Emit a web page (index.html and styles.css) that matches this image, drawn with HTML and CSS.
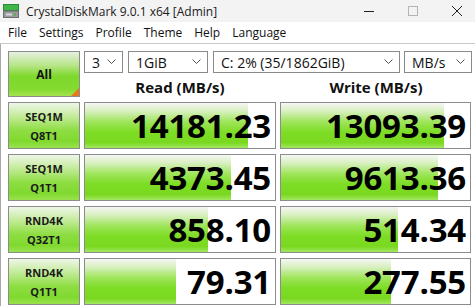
FILE: index.html
```html
<!DOCTYPE html>
<html>
<head>
<meta charset="utf-8">
<link rel="stylesheet" href="styles.css">
</head>
<body>
<div class="window">
  <div class="titlebar">
    <svg class="appicon" width="16" height="14" viewBox="0 0 16 14">
      <rect x="0.5" y="0.5" width="15" height="6" fill="#3fb54a" stroke="#2a8a35"/>
      <rect x="0.5" y="7" width="15" height="6.5" fill="#9a9a9a" stroke="#6e6e6e"/>
      <rect x="3" y="9.5" width="6" height="2" fill="#d8d8d8"/>
      <rect x="11" y="9.5" width="2" height="2" fill="#3fb54a"/>
    </svg>
    <span class="title">CrystalDiskMark 9.0.1 x64 [Admin]</span>
    <div class="controls">
      <svg class="ctl" width="12" height="12" viewBox="0 0 12 12"><path d="M1 6.5H11" stroke="#222" stroke-width="1"/></svg>
      <svg class="ctl" width="12" height="12" viewBox="0 0 12 12"><rect x="1.5" y="1.5" width="9" height="9" fill="none" stroke="#b5b5b5" stroke-width="1"/></svg>
      <svg class="ctl" width="12" height="12" viewBox="0 0 12 12"><path d="M1 1L11 11M11 1L1 11" stroke="#222" stroke-width="1"/></svg>
    </div>
  </div>
  <div class="menubar">
    <span>File</span><span>Settings</span><span>Profile</span><span>Theme</span><span>Help</span><span>Language</span>
  </div>
  <div class="content">
    <div class="top">
      <div class="allbtn">All<span class="corner"></span></div>
      <div class="topright">
        <div class="selects">
          <div class="sel w3"><span>3</span><svg width="9" height="6" viewBox="0 0 9 6"><path d="M0.5 0.5L4.5 4.5L8.5 0.5" fill="none" stroke="#555"/></svg></div>
          <div class="sel w1g"><span>1GiB</span><svg width="9" height="6" viewBox="0 0 9 6"><path d="M0.5 0.5L4.5 4.5L8.5 0.5" fill="none" stroke="#555"/></svg></div>
          <div class="sel wdrv"><span>C: 2% (35/1862GiB)</span><svg width="9" height="6" viewBox="0 0 9 6"><path d="M0.5 0.5L4.5 4.5L8.5 0.5" fill="none" stroke="#555"/></svg></div>
          <div class="sel wunit"><span>MB/s</span><svg width="9" height="6" viewBox="0 0 9 6"><path d="M0.5 0.5L4.5 4.5L8.5 0.5" fill="none" stroke="#555"/></svg></div>
        </div>
        <div class="heads">
          <div class="head">Read (MB/s)</div>
          <div class="head">Write (MB/s)</div>
        </div>
      </div>
    </div>
    <div class="row">
      <div class="label">SEQ1M<br>Q8T1</div>
      <div class="val"><div class="bar" style="width:86%"></div><span>14181.23</span></div>
      <div class="val"><div class="bar" style="width:86%"></div><span>13093.39</span></div>
    </div>
    <div class="row">
      <div class="label">SEQ1M<br>Q1T1</div>
      <div class="val"><div class="bar" style="width:77%"></div><span>4373.45</span></div>
      <div class="val"><div class="bar" style="width:83%"></div><span>9613.36</span></div>
    </div>
    <div class="row">
      <div class="label">RND4K<br>Q32T1</div>
      <div class="val"><div class="bar" style="width:64.5%"></div><span>858.10</span></div>
      <div class="val"><div class="bar" style="width:62%"></div><span>514.34</span></div>
    </div>
    <div class="row">
      <div class="label">RND4K<br>Q1T1</div>
      <div class="val"><div class="bar" style="width:48%"></div><span>79.31</span></div>
      <div class="val"><div class="bar" style="width:58%"></div><span>277.55</span></div>
    </div>
  </div>
</div>
</body>
</html>
```
FILE: styles.css
```css
* { box-sizing: border-box; }
html, body { margin: 0; padding: 0; background: #ffffff; }
body { font-family: "Open Sans", "Noto Sans", "Liberation Sans", sans-serif; color: #000; }
.window { width: 475px; height: 307px; overflow: hidden; background: #fff; }
.titlebar {
  height: 22px; background: #f3f3f3; display: flex; align-items: center;
  padding-left: 3px; font-size: 12px;
}
.appicon { margin-right: 7px; }
.title { color: #1a1a1a; }
.controls { margin-left: auto; display: flex; gap: 32px; padding-right: 12px; align-items: center; }
.ctl { display: block; }
.menubar {
  height: 22px; background: #fff; display: flex; align-items: center;
  font-size: 12px; padding-left: 8px; border-bottom: 1px solid #c8c8c8;
}
.menubar span { margin-right: 12px; color: #111; }
.content {
  border-left: 1px solid #a8a8a8; padding: 7px 0 0 7px;
  display: flex; flex-direction: column; gap: 5px; height: 262px;
}
.top { display: flex; gap: 4px; height: 46px; }
.allbtn {
  position: relative; width: 72px; height: 46px; border: 1px solid #8c8c8c;
  background: linear-gradient(to bottom, #e6efe0 0%, #b8e68a 30%, #7ed82c 55%, #84da30 85%, #a6e34e 100%);
  display: flex; align-items: center; justify-content: center;
  font-weight: 700; font-size: 12px; color: #111;
}
.corner {
  position: absolute; right: 0; bottom: 0; width: 0; height: 0;
  border-left: 8px solid transparent; border-bottom: 8px solid #e8761e;
}
.topright { display: flex; flex-direction: column; gap: 4px; width: 388px; }
.selects { display: flex; gap: 5px; height: 22px; }
.sel {
  border: 1px solid #8a8a8a; background: #fff; height: 22px;
  display: flex; align-items: center; justify-content: space-between;
  padding: 0 6px 0 7px; font-size: 14px; color: #111;
}
.sel svg { flex: none; }
.w3 { width: 39px; }
.w1g { width: 80px; }
.wdrv { width: 187px; margin-right: -1px; }
.wunit { width: 68px; }
.heads { display: flex; gap: 4px; height: 20px; }
.head { flex: 1; text-align: center; font-weight: 700; font-size: 15px; line-height: 20px; color: #111; }
.row { display: flex; gap: 4px; height: 47px; }
.label {
  width: 72px; border: 1px solid #8c8c8c;
  background: linear-gradient(to bottom, #eef6e8 0%, #c6ec9e 28%, #8fde44 60%, #80d92e 85%, #9ae24e 100%);
  display: flex; align-items: center; justify-content: center; text-align: center;
  font-weight: 700; font-size: 11px; line-height: 19px; color: #1a1a1a;
}
.val {
  position: relative; width: 192px; border: 1px solid #8c8c8c; background: #fff;
  display: flex; align-items: center; justify-content: flex-end; padding-right: 4px;
  overflow: hidden;
}
.val + .val { width: 191px; }
.bar {
  position: absolute; left: 0; top: 0; bottom: 0;
  background: linear-gradient(to bottom, #f6f6f4 0%, #d8f0c0 18%, #9ee55a 42%, #7ddc24 65%, #7ad820 88%, #a2e860 100%);
}
.val span {
  position: relative; font-weight: 700; font-size: 33px; line-height: 1; letter-spacing: -0.2px; color: #000;
}
```
